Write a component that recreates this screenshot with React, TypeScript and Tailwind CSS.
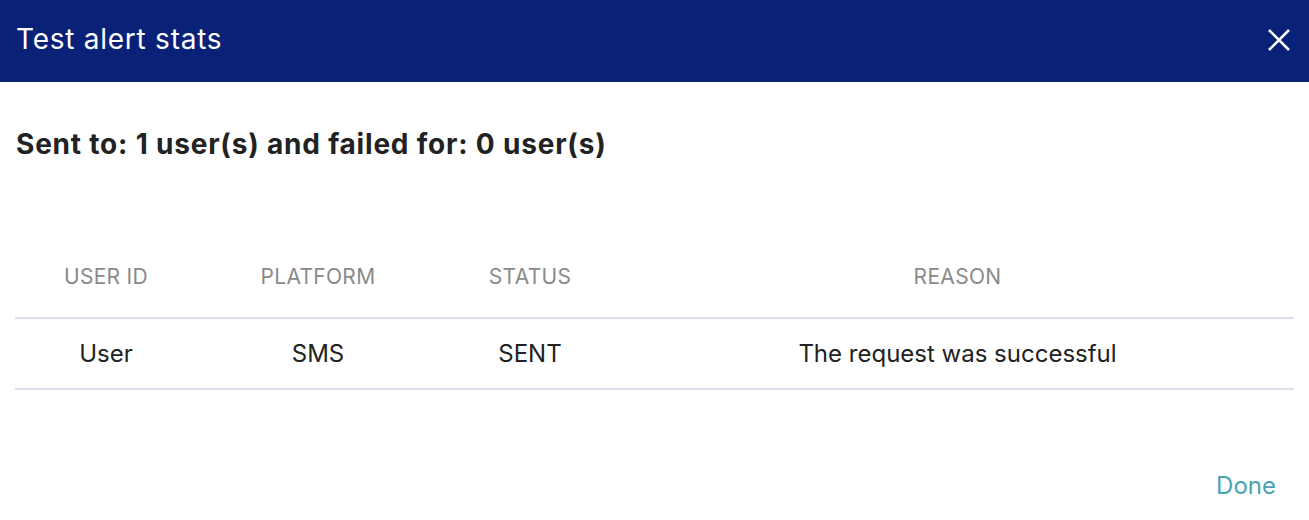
import React from "react";

export default function App() {
  return (
    <div className="w-[1309px] h-[520px] bg-white flex flex-col" style={{ fontFamily: '"Inter", "Noto Sans", sans-serif' }}>
      <div className="h-[82px] bg-[#0a2178] flex items-center justify-between pl-4 pr-[18px]">
        <div className="text-white text-[28px] tracking-[0.75px] leading-none mb-[5px]">Test alert stats</div>
        <svg width="24" height="24" viewBox="0 0 24 24" className="text-white mb-[3px]">
          <path d="M2 2 L22 22 M22 2 L2 22" stroke="currentColor" strokeWidth="2.6" />
        </svg>
      </div>
      <div className="px-4 pt-[44px]">
        <div className="text-[28px] tracking-[0.8px] font-bold text-[#222] leading-[36px]">Sent to: 1 user(s) and failed for: 0 user(s)</div>
      </div>
      <div className="px-[15px] pt-[80px]">
        <table className="w-full border-collapse">
          <thead>
            <tr className="border-b-2 border-[#dde0ec]">
              <th className="w-[182px] h-[76px] pb-[6px] font-normal text-[21px] tracking-[0.3px] text-[#8a8a8a] text-center">USER ID</th>
              <th className="w-[242px] pb-[6px] font-normal text-[21px] tracking-[0.3px] text-[#8a8a8a] text-center">PLATFORM</th>
              <th className="w-[182px] pb-[6px] font-normal text-[21px] tracking-[0.3px] text-[#8a8a8a] text-center">STATUS</th>
              <th className="pb-[6px] font-normal text-[21px] tracking-[0.3px] text-[#8a8a8a] text-center">REASON</th>
            </tr>
          </thead>
          <tbody>
            <tr className="border-b-2 border-[#dde0ec]">
              <td className="h-[71px] text-[24px] text-[#222] text-center">User</td>
              <td className="text-[24px] text-[#222] text-center">SMS</td>
              <td className="text-[24px] text-[#222] text-center">SENT</td>
              <td className="text-[24px] text-[#222] text-center">The request was successful</td>
            </tr>
          </tbody>
        </table>
      </div>
      <div className="flex justify-end pr-[33px] pt-[84px]">
        <button className="text-[24px] text-[#4aa3b5] leading-none">Done</button>
      </div>
    </div>
  );
}
